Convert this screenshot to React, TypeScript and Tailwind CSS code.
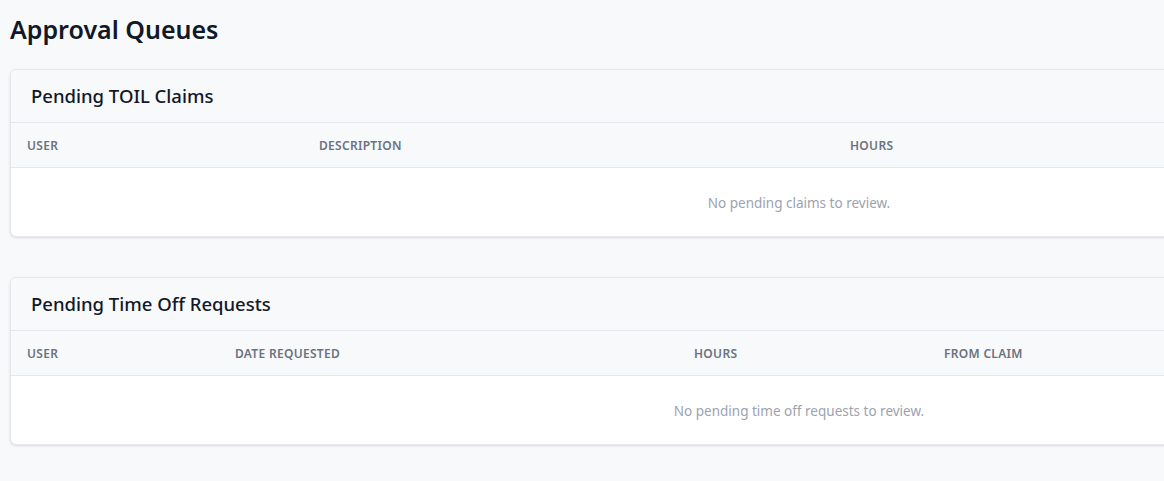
const toilCols = [
  { label: 'User', w: 'w-[292px]' },
  { label: 'Description', w: 'w-[531px]' },
  { label: 'Hours', w: '' },
];

const timeOffCols = [
  { label: 'User', w: 'w-[208px]' },
  { label: 'Date Requested', w: 'w-[459px]' },
  { label: 'Hours', w: 'w-[250px]' },
  { label: 'From Claim', w: '' },
];

function QueueCard({
  title,
  cols,
  empty,
}: {
  title: string;
  cols: { label: string; w: string }[];
  empty: string;
}) {
  return (
    <section className="w-[1578px] rounded-md border border-gray-200 bg-white shadow-sm overflow-hidden">
      <div className="px-5 py-3 bg-[#f8f9fb] border-b border-gray-200">
        <h2 className="text-[18.5px] leading-7 font-medium text-[#111827]">{title}</h2>
      </div>
      <table className="w-full table-fixed border-collapse">
        <thead className="bg-[#f8f9fb]">
          <tr className="border-b border-gray-200">
            {cols.map((c) => (
              <th
                key={c.label}
                className={`${c.w} px-4 pt-[15px] pb-[13px] text-left text-xs leading-4 font-semibold uppercase tracking-wide text-[#6b7280]`}
              >
                {c.label}
              </th>
            ))}
          </tr>
        </thead>
        <tbody>
          <tr>
            <td colSpan={cols.length} className="px-4 pt-[25px] pb-[23px] text-center text-[13.5px] leading-5 text-[#9ca3af]">
              {empty}
            </td>
          </tr>
        </tbody>
      </table>
    </section>
  );
}

export default function App() {
  return (
    <div
      className="min-h-screen w-full overflow-hidden bg-[#f8f9fb] px-[10px] pt-[9px] pb-[10px]"
      style={{ fontFamily: '"Noto Sans", "Open Sans", sans-serif' }}
    >
      <h1 className="text-[25px] leading-10 font-semibold text-[#111827] mb-[20px]">Approval Queues</h1>
      <div className="flex flex-col gap-10">
        <QueueCard title="Pending TOIL Claims" cols={toilCols} empty="No pending claims to review." />
        <QueueCard title="Pending Time Off Requests" cols={timeOffCols} empty="No pending time off requests to review." />
      </div>
    </div>
  );
}
